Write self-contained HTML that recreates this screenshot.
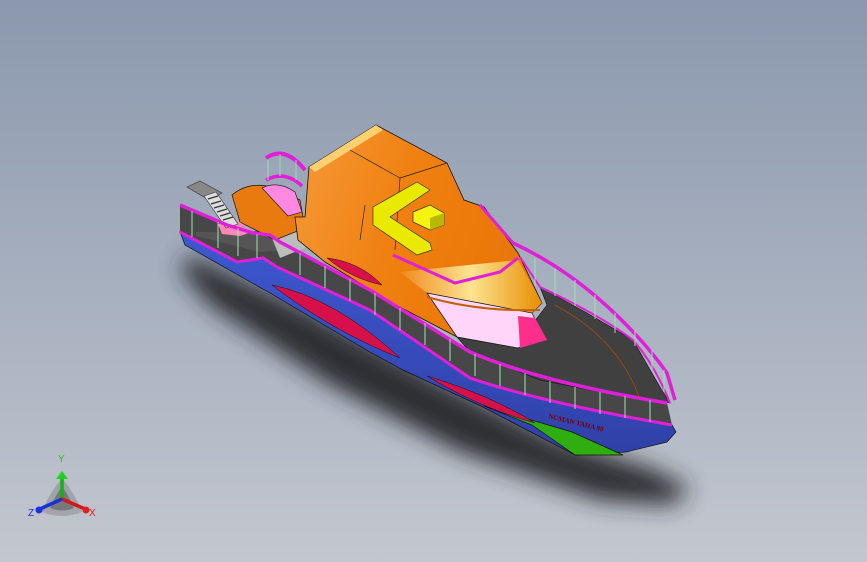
<!DOCTYPE html>
<html><head><meta charset="utf-8"><style>
html,body{margin:0;padding:0;width:867px;height:562px;overflow:hidden}
body{background:linear-gradient(#8b98ad 0%,#a3adbd 45%,#c3c7cf 100%)}
svg{position:absolute;left:0;top:0}
</style></head><body>
<svg width="867" height="562" viewBox="0 0 867 562">
<defs>
<filter id="bl" x="-30%" y="-30%" width="160%" height="160%"><feGaussianBlur stdDeviation="12"/></filter>
<linearGradient id="cab" x1="0" y1="0" x2="1" y2="0.3"><stop offset="0" stop-color="#f59a3a"/><stop offset="0.5" stop-color="#f08010"/><stop offset="1" stop-color="#e87608"/></linearGradient>
<linearGradient id="hl" x1="0" y1="0" x2="1" y2="0"><stop offset="0" stop-color="#f08a20"/><stop offset="0.5" stop-color="#fff0a0"/><stop offset="1" stop-color="#e89000"/></linearGradient>
<linearGradient id="blue" x1="0" y1="0" x2="0" y2="1"><stop offset="0" stop-color="#3e58d0"/><stop offset="1" stop-color="#3040a8"/></linearGradient>
</defs>
<!-- shadow -->
<polygon points="190,255 300,305 430,375 560,440 650,468 690,488 672,505 600,500 460,452 330,385 210,305 180,270" fill="#25272b" opacity="0.95" filter="url(#bl)"/>
<!-- dark band between rails -->
<path d="M180,205 L227,225 L253,233 L270,235 L280,242 L370,290 L470,352 Q540,382 667,403 L672,425 Q540,402 470,378 L370,310 L277,267 L263,258 L237,262 L180,232Z" fill="#474747"/>
<!-- hull blue -->
<path d="M180,232 L237,262 L263,258 L277,267 L370,310 L470,378 Q540,402 672,425 L676,432 L667,442 L626,452 L575,455 L481,406 L470,401 L403,370 L370,352 L270,293 L185,245Z" fill="url(#blue)" stroke="#111" stroke-width="0.7"/>
<!-- green keel -->
<polygon points="484,406 532,425 575,455 623,455 572,432" fill="#2fae10" stroke="#111" stroke-width="0.7"/>
<!-- red slashes -->
<path d="M272,285 Q335,298 400,358 Q330,330 272,285Z" fill="#d8104a" stroke="#111" stroke-width="0.5"/>
<path d="M427,376 Q490,395 535,423 Q480,408 427,376Z" fill="#d8104a" stroke="#111" stroke-width="0.5"/>
<!-- stern deck -->
<polygon points="196,232 250,232 290,225 300,232 290,250 260,252 196,236" fill="#555"/>
<polygon points="270,233 300,228 312,245 280,258" fill="#bdbdbd"/>
<!-- bow deck -->
<polygon points="457,337 518,343 547,305 540,287 587,313 633,340 660,387 670,403 600,392 540,380 470,352" fill="#404040" stroke="#111" stroke-width="0.6"/>
<path d="M555,305 Q620,340 640,400" fill="none" stroke="#a05010" stroke-width="0.8"/>
<!-- stern orange shapes -->
<path d="M232,195 Q250,180 275,188 L300,200 L305,228 L275,240 L240,222 Z" fill="#e87a10" stroke="#111" stroke-width="0.7"/>
<path d="M262,188 Q278,180 295,192 L302,212 L288,216 Z" fill="#ff88e0" stroke="#111" stroke-width="0.6"/>
<polygon points="218,224 240,222 252,232 240,236 222,234" fill="#ff88b8"/>
<!-- ladder -->
<polygon points="187,187 200,181 222,193 209,200" fill="#888" stroke="#333" stroke-width="0.6"/>
<polygon points="204,196 216,192 238,224 226,228" fill="#ddd" stroke="#333" stroke-width="0.6"/>
<path d="M208,199l10-3M211,204l10-3M214,208l10-3M217,212l10-3M220,216l10-3M223,220l10-3" stroke="#333" stroke-width="1.2"/>
<!-- stern arches -->
<path d="M266,158 Q285,145 305,170" fill="none" stroke="#e020d8" stroke-width="4"/>
<path d="M266,180 Q285,170 302,186" fill="none" stroke="#e020d8" stroke-width="3.5"/>
<path d="M268,160v20M280,154v22M296,160v20" stroke="#9fd8b0" stroke-width="1"/>
<!-- cabin -->
<path d="M309,167 L376,125 L447,163 L464,200 L484,207 L518,253 L542,303 L532,313 L518,343 L457,337 L396,305 L325,262 L298,240 L295,217 L305,217 Z" fill="url(#cab)" stroke="#111" stroke-width="0.8"/>
<path d="M309,167 L376,125 L383,130 L315,172Z" fill="#ffd070"/>
<path d="M350,150 L400,178 M400,178 L447,163 M400,178 L395,250 M365,205 L360,240" fill="none" stroke="#222" stroke-width="0.7"/>
<path d="M400,272 L518,260 L542,303 L532,313 L427,293 Z" fill="url(#hl)" opacity="0.9"/>
<!-- windshield -->
<polygon points="427,293 532,313 545,340 518,348 457,337" fill="#ffd6fa" stroke="#111" stroke-width="0.7"/>
<polygon points="518,316 535,318 547,340 520,348" fill="#ff2e8c"/>
<path d="M393,255 L455,283 L500,272 L518,258" fill="none" stroke="#e020d8" stroke-width="3"/>
<path d="M427,297 Q480,312 540,310" fill="none" stroke="#c06008" stroke-width="2"/>
<!-- red on cabin -->
<path d="M327,258 Q360,262 382,285 Q350,278 327,258Z" fill="#d8104a" stroke="#111" stroke-width="0.5"/>
<!-- yellow seat -->
<polygon points="373,207 417,182 430,190 390,217 430,243 432,250 417,255 373,225" fill="#eaea00" stroke="#333" stroke-width="0.7"/>
<polygon points="413,212 430,205 444,213 444,225 430,230 413,222" fill="#f4f410" stroke="#333" stroke-width="0.7"/>
<polygon points="430,218 444,213 444,225 430,230" fill="#b8b800"/>
<!-- side rails -->
<path d="M180,205 L227,225 L253,233 L270,235 L280,242 L370,290 L470,352 Q540,382 667,403" fill="none" stroke="#e020d8" stroke-width="3.5"/>
<path d="M180,232 L237,262 L263,258 L277,267 L370,310 L470,378 Q540,402 672,425" fill="none" stroke="#e020d8" stroke-width="3"/>
<!-- right rails -->
<path d="M513,243 Q560,265 600,300 Q640,335 667,373 L675,400" fill="none" stroke="#e020d8" stroke-width="3.5"/>
<path d="M520,257 L540,287 Q600,315 633,340 Q655,365 670,403" fill="none" stroke="#e020d8" stroke-width="2"/>
<path d="M480,205 L513,243" stroke="#e020d8" stroke-width="3"/>
<g stroke="#9fe0b8" stroke-width="1">
<path d="M192,211v26M218,222v26M238,228v28M257,234v24M300,253v22M325,266v22M350,279v22M375,293v22M400,308v22M425,323v22M450,339v22M475,354v22M500,364v22M525,373v22M550,381v22M575,387v22M600,392v22M625,396v22M650,400v22"/>
<path d="M535,258v28M555,268v28M575,280v26M595,295v24M615,313v20M635,330v16M652,350v20M664,370v22"/>
</g>
<text x="548" y="418" font-family="Liberation Serif,serif" font-size="7" font-weight="bold" fill="#700" transform="rotate(14 548 418)">NUMAN TAHA 90</text>
<!-- axis triad -->
<path d="M62,478 Q48,495 42,512 Q62,520 82,512 Q76,495 62,478Z" fill="#777" opacity="0.4"/>
<path d="M62,486 Q54,498 50,508 Q62,513 74,508 Q70,498 62,486Z" fill="#444" opacity="0.45"/>
<line x1="62" y1="499" x2="62" y2="477" stroke="#18b018" stroke-width="3.5"/>
<path d="M56,479 L62,471 L68,479Z" fill="#20d020"/>
<line x1="62" y1="499" x2="85" y2="509" stroke="#d01818" stroke-width="3.5"/>
<line x1="62" y1="499" x2="40" y2="509" stroke="#1830d8" stroke-width="3.5"/>
<circle cx="86" cy="510" r="3.5" fill="#e02020"/>
<circle cx="39" cy="510" r="3.5" fill="#2030e0"/>
<text x="58" y="462" font-family="Liberation Sans,sans-serif" font-size="10" fill="#20c020">Y</text>
<text x="89" y="516" font-family="Liberation Sans,sans-serif" font-size="10" fill="#e02020">X</text>
<text x="28" y="516" font-family="Liberation Sans,sans-serif" font-size="10" fill="#2030e0">Z</text>
</svg>
</body></html>
